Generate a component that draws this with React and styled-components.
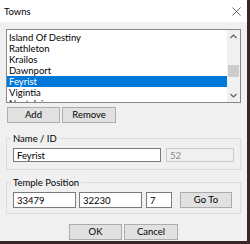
import React from 'react';
import styled, { createGlobalStyle } from 'styled-components';

const GlobalStyle = createGlobalStyle`
  html, body {
    margin: 0;
    padding: 0;
    background: #3a2626;
  }
  body {
    font-family: Lato, "Noto Sans", sans-serif;
    font-size: 9.5px;
  }
`;

const Window = styled.div`
  width: 247px;
  height: 241px;
  background: #f0f0f0;
  display: flex;
  flex-direction: column;
`;

const TitleBar = styled.div`
  height: 22px;
  background: #ffffff;
  display: flex;
  align-items: center;
  justify-content: space-between;
  padding: 0 6px 0 4px;
  box-sizing: border-box;
  color: #000;
`;

const Body = styled.div`
  padding: 7px 6px 0 6px;
  display: flex;
  flex-direction: column;
`;

const ListBox = styled.div`
  height: 74px;
  border: 1px solid #828790;
  background: #fff;
  box-sizing: border-box;
  display: flex;
`;

const Items = styled.div`
  flex: 1;
  overflow: hidden;
  padding-top: 2px;
`;

const Item = styled.div`
  height: 11px;
  line-height: 11px;
  padding-left: 2px;
  white-space: nowrap;
  background: ${p => (p.$selected ? '#0078d7' : 'transparent')};
  color: ${p => (p.$selected ? '#fff' : '#000')};
`;

const ScrollBar = styled.div`
  width: 13px;
  background: #f0f0f0;
  display: flex;
  flex-direction: column;
`;

const Arrow = styled.div`
  height: 13px;
  display: flex;
  align-items: center;
  justify-content: center;
`;

const Track = styled.div`
  flex: 1;
  padding-top: 22px;
  display: flex;
  justify-content: center;
`;

const Thumb = styled.div`
  width: 11px;
  height: 12px;
  background: #cdcdcd;
`;

const Row = styled.div`
  display: flex;
  gap: ${p => p.$gap || 0}px;
  margin-top: ${p => p.$top || 0}px;
  margin-left: ${p => p.$left || 0}px;
  justify-content: ${p => (p.$center ? 'center' : 'flex-start')};
  align-items: center;
`;

const Button = styled.button`
  width: ${p => p.$w}px;
  height: 16px;
  margin-left: ${p => p.$ml || 0}px;
  background: #e1e1e1;
  border: 1px solid #adadad;
  box-sizing: border-box;
  font-family: inherit;
  font-size: 9.5px;
  color: #000;
  padding: 0;
  line-height: 14px;
`;

const Group = styled.fieldset`
  margin: ${p => p.$top}px 0 0 0;
  border: 1px solid #dcdcdc;
  padding: 4px 6px ${p => p.$bottom}px 6px;
  min-width: 0;
`;

const Legend = styled.legend`
  padding: 0 2px;
  margin-left: -2px;
  line-height: 11px;
  color: #000;
`;

const Field = styled.div`
  width: ${p => p.$w}px;
  height: ${p => p.$h}px;
  margin-left: ${p => p.$ml || 0}px;
  box-sizing: border-box;
  border: 1px solid ${p => (p.$disabled ? '#cccccc' : '#7a7a7a')};
  background: ${p => (p.$disabled ? '#f0f0f0' : '#fff')};
  color: ${p => (p.$disabled ? '#8a8a8a' : '#000')};
  padding-left: 3px;
  display: flex;
  align-items: center;
`;

const towns = ['Island Of Destiny', 'Rathleton', 'Krailos', 'Dawnport', 'Feyrist', 'Vigintia', 'Nostalgia'];

export default function App() {
  return (
    <>
      <GlobalStyle />
      <Window>
        <TitleBar>
          <span>Towns</span>
          <svg width="9" height="9" viewBox="0 0 9 9">
            <path d="M0.5 0.5 L8.5 8.5 M8.5 0.5 L0.5 8.5" stroke="#6b6b6b" strokeWidth="1" />
          </svg>
        </TitleBar>
        <Body>
          <ListBox>
            <Items>
              {towns.map(t => (
                <Item key={t} $selected={t === 'Feyrist'}>{t}</Item>
              ))}
            </Items>
            <ScrollBar>
              <Arrow>
                <svg width="7" height="5" viewBox="0 0 7 5">
                  <path d="M0.5 4 L3.5 1 L6.5 4" stroke="#606060" strokeWidth="1.2" fill="none" />
                </svg>
              </Arrow>
              <Track><Thumb /></Track>
              <Arrow>
                <svg width="7" height="5" viewBox="0 0 7 5">
                  <path d="M0.5 1 L3.5 4 L6.5 1" stroke="#606060" strokeWidth="1.2" fill="none" />
                </svg>
              </Arrow>
            </ScrollBar>
          </ListBox>
          <Row $top={4} $left={1} $gap={2}>
            <Button $w={53}>Add</Button>
            <Button $w={54}>Remove</Button>
          </Row>
          <Group $top={10} $bottom={7}>
            <Legend>Name / ID</Legend>
            <Row>
              <Field $w={148} $h={14}>Feyrist</Field>
              <Field $w={68} $h={14} $ml={5} $disabled>52</Field>
            </Row>
          </Group>
          <Group $top={7} $bottom={5}>
            <Legend>Temple Position</Legend>
            <Row>
              <Field $w={63} $h={16}>33479</Field>
              <Field $w={63} $h={16} $ml={3}>32230</Field>
              <Field $w={26} $h={16} $ml={4}>7</Field>
              <Button $w={52} $ml={8}>Go To</Button>
            </Row>
          </Group>
          <Row $top={10} $center $gap={2}>
            <Button $w={53}>OK</Button>
            <Button $w={54}>Cancel</Button>
          </Row>
        </Body>
      </Window>
    </>
  );
}
